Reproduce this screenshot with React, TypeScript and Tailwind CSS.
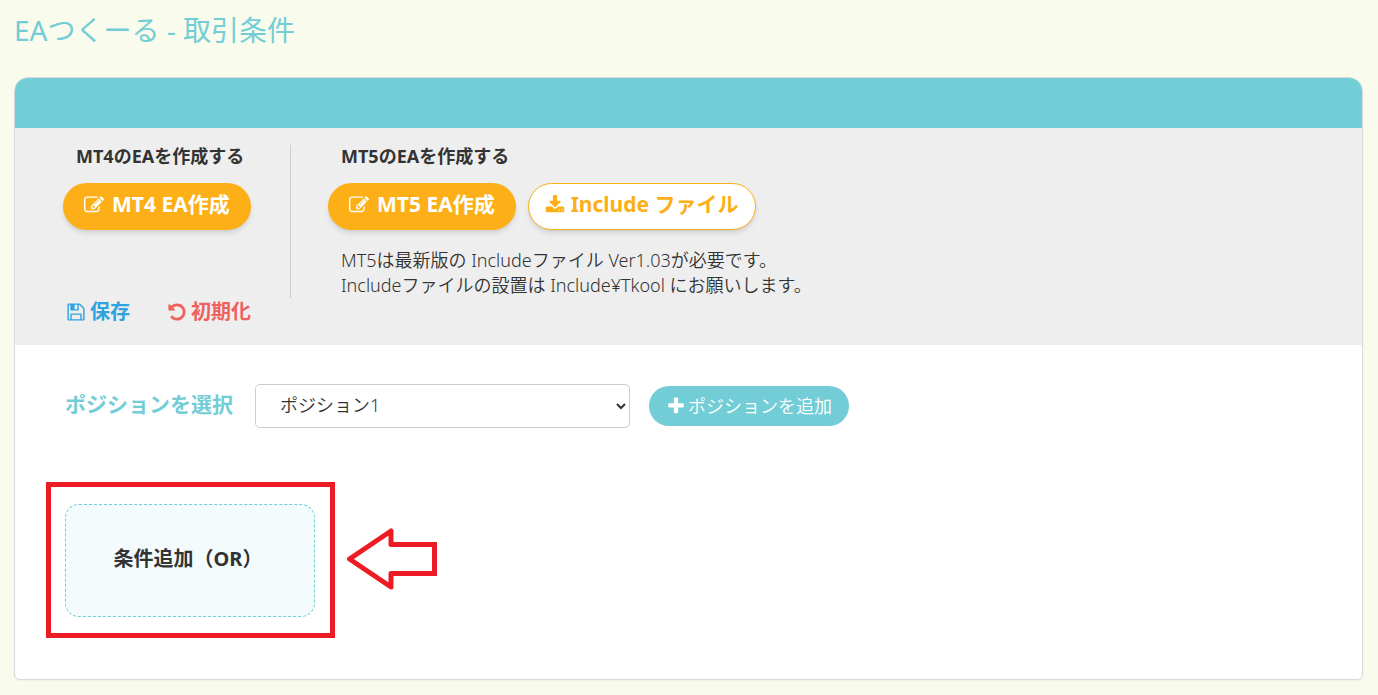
import type { ReactNode } from "react";
import { useState } from "react";

const icons = {
  edit: "M888 1184l116-116-152-152-116 116v56h96v96h56zm440-720q-16-16-33 1l-350 350q-17 17-1 33t33-1l350-350q17-17 1-33zm80 594v190q0 119-84.5 203.5t-203.5 84.5h-832q-119 0-203.5-84.5t-84.5-203.5v-832q0-119 84.5-203.5t203.5-84.5h832q63 0 117 25 15 7 18 23 3 17-9 29l-49 49q-14 14-32 8-23-6-45-6h-832q-66 0-113 47t-47 113v832q0 66 47 113t113 47h832q66 0 113-47t47-113v-126q0-13 9-22l64-64q15-15 35-7t20 29zm-96-738l288 288-672 672h-288v-288zm444 132l-92 92-288-288 92-92q28-28 68-28t68 28l152 152q28 28 28 68t-28 68z",
  download:
    "M1344 1344q0-26-19-45t-45-19-45 19-19 45 19 45 45 19 45-19 19-45zm256 0q0-26-19-45t-45-19-45 19-19 45 19 45 45 19 45-19 19-45zm128-224v320q0 40-28 68t-68 28h-1472q-40 0-68-28t-28-68v-320q0-40 28-68t68-28h465l135 136q58 56 136 56t136-56l136-136h464q40 0 68 28t28 68zm-325-569q17 41-14 70l-448 448q-18 19-45 19t-45-19l-448-448q-31-29-14-70 17-39 59-39h256v-448q0-26 19-45t45-19h256q26 0 45 19t19 45v448h256q42 0 59 39z",
  save: "M512 1536h768v-384h-768v384zm896 0h128v-896q0-14-10-38.5t-20-34.5l-281-281q-10-10-34-20t-39-10v416q0 40-28 68t-68 28h-576q-40 0-68-28t-28-68v-416h-128v1280h128v-416q0-40 28-68t68-28h832q40 0 68 28t28 68v416zm-384-928v-320q0-13-9.5-22.5t-22.5-9.5h-192q-13 0-22.5 9.5t-9.5 22.5v320q0 13 9.5 22.5t22.5 9.5h192q13 0 22.5-9.5t9.5-22.5zm640 32v928q0 40-28 68t-68 28h-1344q-40 0-68-28t-28-68v-1344q0-40 28-68t68-28h928q40 0 88 20t76 48l280 280q28 28 48 76t20 88z",
  undo: "M1664 896q0 156-61 298t-164 245-245 164-298 61q-172 0-327-72.5t-264-204.5q-7-10-6.5-22.5t8.5-20.5l137-138q10-9 25-9 16 2 23 12 73 95 179 147t225 52q104 0 198.5-40.5t163.5-109.5 109.5-163.5 40.5-198.5-40.5-198.5-109.5-163.5-163.5-109.5-198.5-40.5q-98 0-188 35.5t-160 101.5l137 138q31 30 14 69-17 40-59 40h-448q-26 0-45-19t-19-45v-448q0-42 40-59 39-17 69 14l130 129q107-101 244.5-156.5t284.5-55.5q156 0 298 61t245 164 164 245 61 298z",
  plus: "M1600 736v192q0 40-28 68t-68 28h-416v416q0 40-28 68t-68 28h-192q-40 0-68-28t-28-68v-416h-416q-40 0-68-28t-28-68v-192q0-40 28-68t68-28h416v-416q0-40 28-68t68-28h192q40 0 68 28t28 68v416h416q40 0 68 28t28 68z",
};

function Icon({ name }: { name: keyof typeof icons }) {
  return (
    <svg
      viewBox="0 0 1792 1792"
      className="h-5 w-5 shrink-0"
      fill="currentColor"
      aria-hidden="true"
    >
      <path d={icons[name]} />
    </svg>
  );
}

function CreateButton({ children }: { children: ReactNode }) {
  return (
    <button className="flex h-[47px] items-center gap-2 rounded-full bg-[#fdaf17] px-[21px] pb-1 text-[21px] font-bold text-white shadow-md">
      <Icon name="edit" />
      {children}
    </button>
  );
}

function App() {
  const [position, setPosition] = useState("1");

  return (
    <div className="min-h-screen bg-[#f9fbed] px-[15px] pt-3 pb-[15px] pl-[14px] font-['Noto_Sans','Noto_Sans_CJK_JP',sans-serif] text-[#333]">
      <h1 className="text-[28px] leading-[37px] font-normal text-[#73cdd6]">
        EAつくーる - 取引条件
      </h1>

      <main className="mt-7 overflow-hidden rounded-t-[14px] rounded-b-md border border-[#d9dadb] bg-white shadow-xs">
        <div className="h-[50px] bg-[#73cdd6]"></div>

        <section className="flex bg-[#eee] px-12 pt-[17px] pb-5">
          <div className="flex w-[227px] flex-col">
            <h2 className="pl-[13px] text-lg leading-[22px] font-bold">
              MT4のEAを作成する
            </h2>
            <div className="mt-4 flex">
              <CreateButton>MT4 EA作成</CreateButton>
            </div>
            <div className="mt-auto flex gap-[37px] pl-[3px] text-xl leading-[26px] font-bold">
              <button className="flex items-center gap-1 text-[#2ea3e0]">
                <Icon name="save" />
                保存
              </button>
              <button className="flex items-center gap-1 text-[#f0605c]">
                <Icon name="undo" />
                初期化
              </button>
            </div>
          </div>

          <div className="mb-[27px] h-[153px] border-l border-[#ccc] pl-[37px]">
            <h2 className="pl-[13px] text-lg leading-[22px] font-bold">
              MT5のEAを作成する
            </h2>
            <div className="mt-4 flex gap-3">
              <CreateButton>MT5 EA作成</CreateButton>
              <button className="flex h-[47px] items-center gap-[6px] rounded-full border border-[#fdaf17] bg-white px-4 pb-1 text-[21px] font-bold text-[#fdaf17] shadow-md">
                <Icon name="download" />
                Include ファイル
              </button>
            </div>
            <p className="mt-[18px] pl-[13px] text-lg leading-[25px] font-[350]">
              MT5は最新版の Includeファイル Ver1.03が必要です。
              <br />
              Includeファイルの設置は Include¥Tkool にお願いします。
            </p>
          </div>
        </section>

        <section className="px-[50px] pt-[39px] pb-[62px]">
          <div className="flex items-center">
            <label
              htmlFor="position"
              className="w-[190px] pb-1 text-[21px] leading-8 font-bold text-[#73cdd6]"
            >
              ポジションを選択
            </label>
            <select
              id="position"
              value={position}
              onChange={(e) => setPosition(e.target.value)}
              className="h-11 w-[375px] rounded-[5px] border border-[#ccc] bg-white pb-[3px] pl-5 text-lg font-[350]"
            >
              <option value="1">ポジション1</option>
            </select>
            <button className="ml-[19px] flex h-10 items-center gap-0.5 rounded-full bg-[#73cdd6] px-[17px] text-lg font-[350] text-white">
              <Icon name="plus" />
              ポジションを追加
            </button>
          </div>

          <div className="relative mt-[76px] w-[250px]">
            <button className="h-[113px] w-full rounded-[14px] border border-dashed border-[#73cdd6] bg-[#f3fbfd] pr-1 pb-1 text-xl font-bold">
              条件追加（OR）
            </button>
            <div className="pointer-events-none absolute -top-[22px] -right-5 -bottom-[21px] -left-[19px] border-5 border-[#ed1c24]"></div>
            <svg
              className="pointer-events-none absolute top-6 left-[282px] h-[62px] w-[91px]"
              viewBox="0 0 91 62"
              fill="none"
              stroke="#ed1c24"
              strokeWidth="5"
              aria-hidden="true"
            >
              <path
                d="M2.500 31L44 3V16.500H87.500V45.500H44V59Z"
                strokeLinejoin="round"
              />
              <path d="M44 16.500H87.500V45.500H44" />
            </svg>
          </div>
        </section>
      </main>
    </div>
  );
}

export default App;
